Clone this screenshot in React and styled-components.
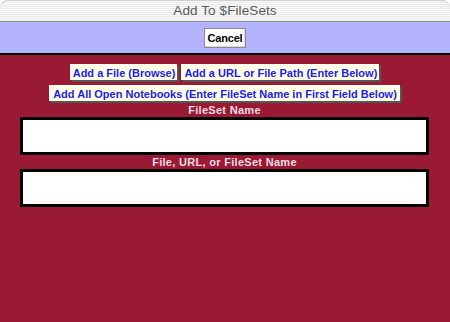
import React from "react";
import styled, { createGlobalStyle } from "styled-components";

const Global = createGlobalStyle`
  html, body { margin: 0; padding: 0; background: #ffffff; }
  body { font-family: "Liberation Sans", Arial, sans-serif; }
`;

const Window = styled.div`
  width: 450px;
  height: 322px;
  display: flex;
  flex-direction: column;
  overflow: hidden;
  background: #9a1a33;
`;

const TitleWrap = styled.div`
  background: #ffffff;
`;

const TitleBar = styled.div`
  height: 21px;
  border-bottom: 1px solid #8e8e8e;
  border-radius: 8px 8px 0 0;
  background: repeating-linear-gradient(to bottom, #ececec 0 1px, #f7f7f7 1px 2px);
  box-shadow: inset 0 1px 0 #cfcfcf;
  display: flex;
  align-items: center;
  justify-content: center;
  color: #5a5a5a;
  font-family: "Liberation Sans", Arial, sans-serif;
  font-size: 13.5px;
  letter-spacing: 0.1px;
  line-height: 21px;
`;

const Toolbar = styled.div`
  height: 33px;
  box-sizing: border-box;
  background: #b3b3ff;
  border-bottom: 2px solid #000;
  display: flex;
  justify-content: center;
  align-items: flex-start;
  padding-top: 6px;
`;

const CancelButton = styled.button`
  width: 42px;
  height: 20px;
  padding: 0;
  margin: 0;
  background: #ffffff;
  border: 1px solid #8a8a8a;
  box-shadow: inset -1px -1px 0 #d8d8d8;
  font-family: "Liberation Sans", Arial, sans-serif;
  font-weight: bold;
  font-size: 11px;
  letter-spacing: -0.2px;
  color: #000;
`;

const Content = styled.div`
  flex: 1;
  background: #9a1a33;
  padding: 9px 21px 0 20px;
  display: flex;
  flex-direction: column;
`;

const ButtonRow = styled.div`
  display: flex;
  justify-content: center;
  gap: 4px;
  margin-bottom: ${(p) => p.$gap || 0}px;
`;

const ActionButton = styled.button`
  height: 16px;
  padding: 0 ${(p) => p.$pad || 2}px;
  margin: 0;
  background: #ffffe6;
  border: none;
  border-top: 1px solid #ffffff;
  border-left: 1px solid #ffffff;
  box-shadow: 2px 2px 0 #555555;
  color: #1c1cec;
  font-family: "Liberation Sans", Arial, sans-serif;
  font-weight: bold;
  font-size: 11px;
  line-height: 14px;
  letter-spacing: 0;
  white-space: nowrap;
`;

const FieldLabel = styled.div`
  text-align: center;
  color: #f2dde6;
  font-family: "Liberation Sans", Arial, sans-serif;
  font-weight: bold;
  font-size: 11px;
  letter-spacing: 0.3px;
  line-height: 14px;
  margin-top: ${(p) => p.$top || 0}px;
`;

const TextField = styled.input`
  display: block;
  width: 100%;
  height: 38px;
  box-sizing: border-box;
  margin: 0;
  border: 3px solid #000;
  background: #fff;
  outline: none;
  padding: 2px 4px;
  font-family: "Liberation Sans", Arial, sans-serif;
  font-size: 12px;
`;

export default function App() {
  return (
    <>
      <Global />
      <Window>
        <TitleWrap>
          <TitleBar>Add To $FileSets</TitleBar>
        </TitleWrap>
        <Toolbar>
          <CancelButton>Cancel</CancelButton>
        </Toolbar>
        <Content>
          <ButtonRow $gap={5}>
            <ActionButton>Add a File (Browse)</ActionButton>
            <ActionButton>Add a URL or File Path (Enter Below)</ActionButton>
          </ButtonRow>
          <ButtonRow>
            <ActionButton $pad={3}>
              Add All Open Notebooks (Enter FileSet Name in First Field Below)
            </ActionButton>
          </ButtonRow>
          <FieldLabel $top={2}>FileSet Name</FieldLabel>
          <TextField type="text" />
          <FieldLabel>File, URL, or FileSet Name</FieldLabel>
          <TextField type="text" />
        </Content>
      </Window>
    </>
  );
}
